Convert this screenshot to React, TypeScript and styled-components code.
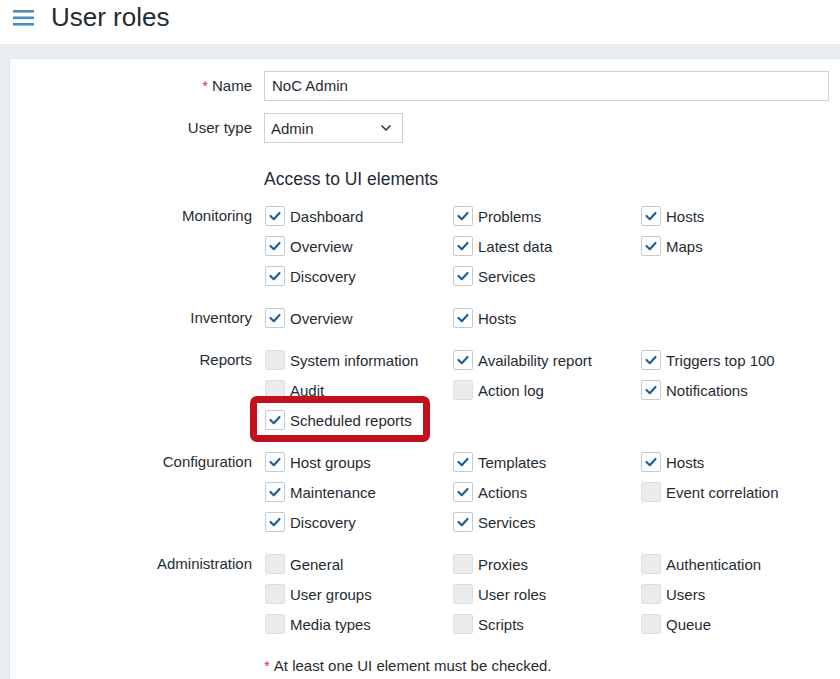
import React from "react";
import styled, { createGlobalStyle } from "styled-components";

const GlobalStyle = createGlobalStyle`
  html, body { margin: 0; padding: 0; }
  body {
    font-family: "Liberation Sans", Arial, sans-serif;
    color: #1f2c33;
    background: #ebeef0;
    overflow: hidden;
  }
`;

const Page = styled.div`
  width: 840px;
  height: 679px;
  display: flex;
  flex-direction: column;
  background: #ebeef0;
`;

const Header = styled.header`
  height: 44px;
  background: #ffffff;
  display: flex;
  align-items: center;
  gap: 17px;
  padding-left: 13px;
  flex-shrink: 0;
`;

const Title = styled.h1`
  margin: 0;
  font-size: 26px;
  font-weight: 400;
  color: #1f2c33;
  line-height: 1;
  margin-top: -10px;
  margin-left: -1px;
`;

const Body = styled.div`
  flex: 1;
  padding: 14px 0 0 9px;
  display: flex;
`;

const Panel = styled.main`
  flex: 1;
  background: #ffffff;
  border-left: 1px solid #dfe4e7;
  border-top: 1px solid #e3e7ea;
  padding-top: 12px;
`;

const FormRow = styled.div<{ $mb?: number }>`
  display: grid;
  grid-template-columns: 242px 1fr;
  column-gap: 12px;
  margin-bottom: ${(p) => p.$mb ?? 12}px;
`;

const Label = styled.div`
  font-size: 15px;
  line-height: 30px;
  text-align: right;
  white-space: nowrap;
`;

const Req = styled.span`
  color: #e0323c;
  margin-right: 4px;
`;

const TextInput = styled.div`
  box-sizing: border-box;
  height: 30px;
  width: 565px;
  border: 1px solid #cdd2d5;
  padding: 0 7px;
  font-size: 15px;
  line-height: 28px;
  background: #fff;
`;

const Select = styled.div`
  box-sizing: border-box;
  height: 30px;
  width: 139px;
  border: 1px solid #cdd2d5;
  padding: 0 10px 0 6px;
  font-size: 15px;
  display: flex;
  align-items: center;
  justify-content: space-between;
`;

const Heading = styled.div`
  font-size: 17.5px;
  line-height: 30px;
`;

const Grid = styled.div`
  display: grid;
  grid-template-columns: repeat(3, 188px);
  grid-auto-rows: 30px;
`;

const Item = styled.label<{ $highlight?: boolean }>`
  position: relative;
  display: flex;
  align-items: center;
  gap: 5px;
  padding-left: 1px;
  font-size: 15px;
  white-space: nowrap;
  ${(p) =>
    p.$highlight &&
    `
    &::before {
      content: "";
      position: absolute;
      left: -14px;
      right: 22px;
      top: -9px;
      bottom: -7px;
      border: 7px solid #c2101c;
      border-radius: 7px;
    }
  `}
`;

const Box = styled.span<{ $checked: boolean }>`
  box-sizing: border-box;
  width: 20px;
  height: 20px;
  border-radius: 2px;
  border: 1px solid ${(p) => (p.$checked ? "#c3cacf" : "#dcdfe1")};
  background: ${(p) => (p.$checked ? "#ffffff" : "#ebebeb")};
  display: flex;
  align-items: center;
  justify-content: center;
  flex-shrink: 0;
`;

const Note = styled.div`
  font-size: 15px;
  line-height: 30px;
  color: #2b2b2b;
`;

type Entry = [string, boolean] | null;

const Check = ({ label, checked, highlight }: { label: string; checked: boolean; highlight?: boolean }) => (
  <Item $highlight={highlight}>
    <Box $checked={checked}>
      {checked && (
        <svg width="14" height="14" viewBox="0 0 14 14">
          <polyline points="2.5,7 5.8,10.2 11.5,4" fill="none" stroke="#1d6096" strokeWidth="2.2" strokeLinecap="round" strokeLinejoin="round" />
        </svg>
      )}
    </Box>
    {label}
  </Item>
);

const sections: { name: string; items: Entry[] }[] = [
  {
    name: "Monitoring",
    items: [
      ["Dashboard", true], ["Problems", true], ["Hosts", true],
      ["Overview", true], ["Latest data", true], ["Maps", true],
      ["Discovery", true], ["Services", true], null,
    ],
  },
  { name: "Inventory", items: [["Overview", true], ["Hosts", true], null] },
  {
    name: "Reports",
    items: [
      ["System information", false], ["Availability report", true], ["Triggers top 100", true],
      ["Audit", false], ["Action log", false], ["Notifications", true],
      ["Scheduled reports", true], null, null,
    ],
  },
  {
    name: "Configuration",
    items: [
      ["Host groups", true], ["Templates", true], ["Hosts", true],
      ["Maintenance", true], ["Actions", true], ["Event correlation", false],
      ["Discovery", true], ["Services", true], null,
    ],
  },
  {
    name: "Administration",
    items: [
      ["General", false], ["Proxies", false], ["Authentication", false],
      ["User groups", false], ["User roles", false], ["Users", false],
      ["Media types", false], ["Scripts", false], ["Queue", false],
    ],
  },
];

export default function App() {
  return (
    <Page>
      <GlobalStyle />
      <Header>
        <svg width="22" height="16" viewBox="0 0 22 16" style={{ marginTop: -8 }}>
          <rect x="0" y="0" width="21" height="2.6" fill="#4e8cc0" />
          <rect x="0" y="6.5" width="21" height="2.6" fill="#4e8cc0" />
          <rect x="0" y="13" width="21" height="2.6" fill="#4e8cc0" />
        </svg>
        <Title>User roles</Title>
      </Header>
      <Body>
        <Panel>
          <FormRow>
            <Label><Req>*</Req>Name</Label>
            <TextInput>NoC Admin</TextInput>
          </FormRow>
          <FormRow $mb={21}>
            <Label>User type</Label>
            <Select>
              Admin
              <svg width="12" height="8" viewBox="0 0 12 8">
                <polyline points="1.5,1.5 6,6 10.5,1.5" fill="none" stroke="#2b2b2b" strokeWidth="1.5" />
              </svg>
            </Select>
          </FormRow>
          <FormRow $mb={7}>
            <Label />
            <Heading>Access to UI elements</Heading>
          </FormRow>
          {sections.map((s) => (
            <FormRow key={s.name}>
              <Label>{s.name}</Label>
              <Grid>
                {s.items.map((it, i) =>
                  it ? (
                    <Check key={i} label={it[0]} checked={it[1]} highlight={it[0] === "Scheduled reports"} />
                  ) : (
                    <span key={i} />
                  )
                )}
              </Grid>
            </FormRow>
          ))}
          <FormRow>
            <Label />
            <Note><Req>*</Req>At least one UI element must be checked.</Note>
          </FormRow>
        </Panel>
      </Body>
    </Page>
  );
}
